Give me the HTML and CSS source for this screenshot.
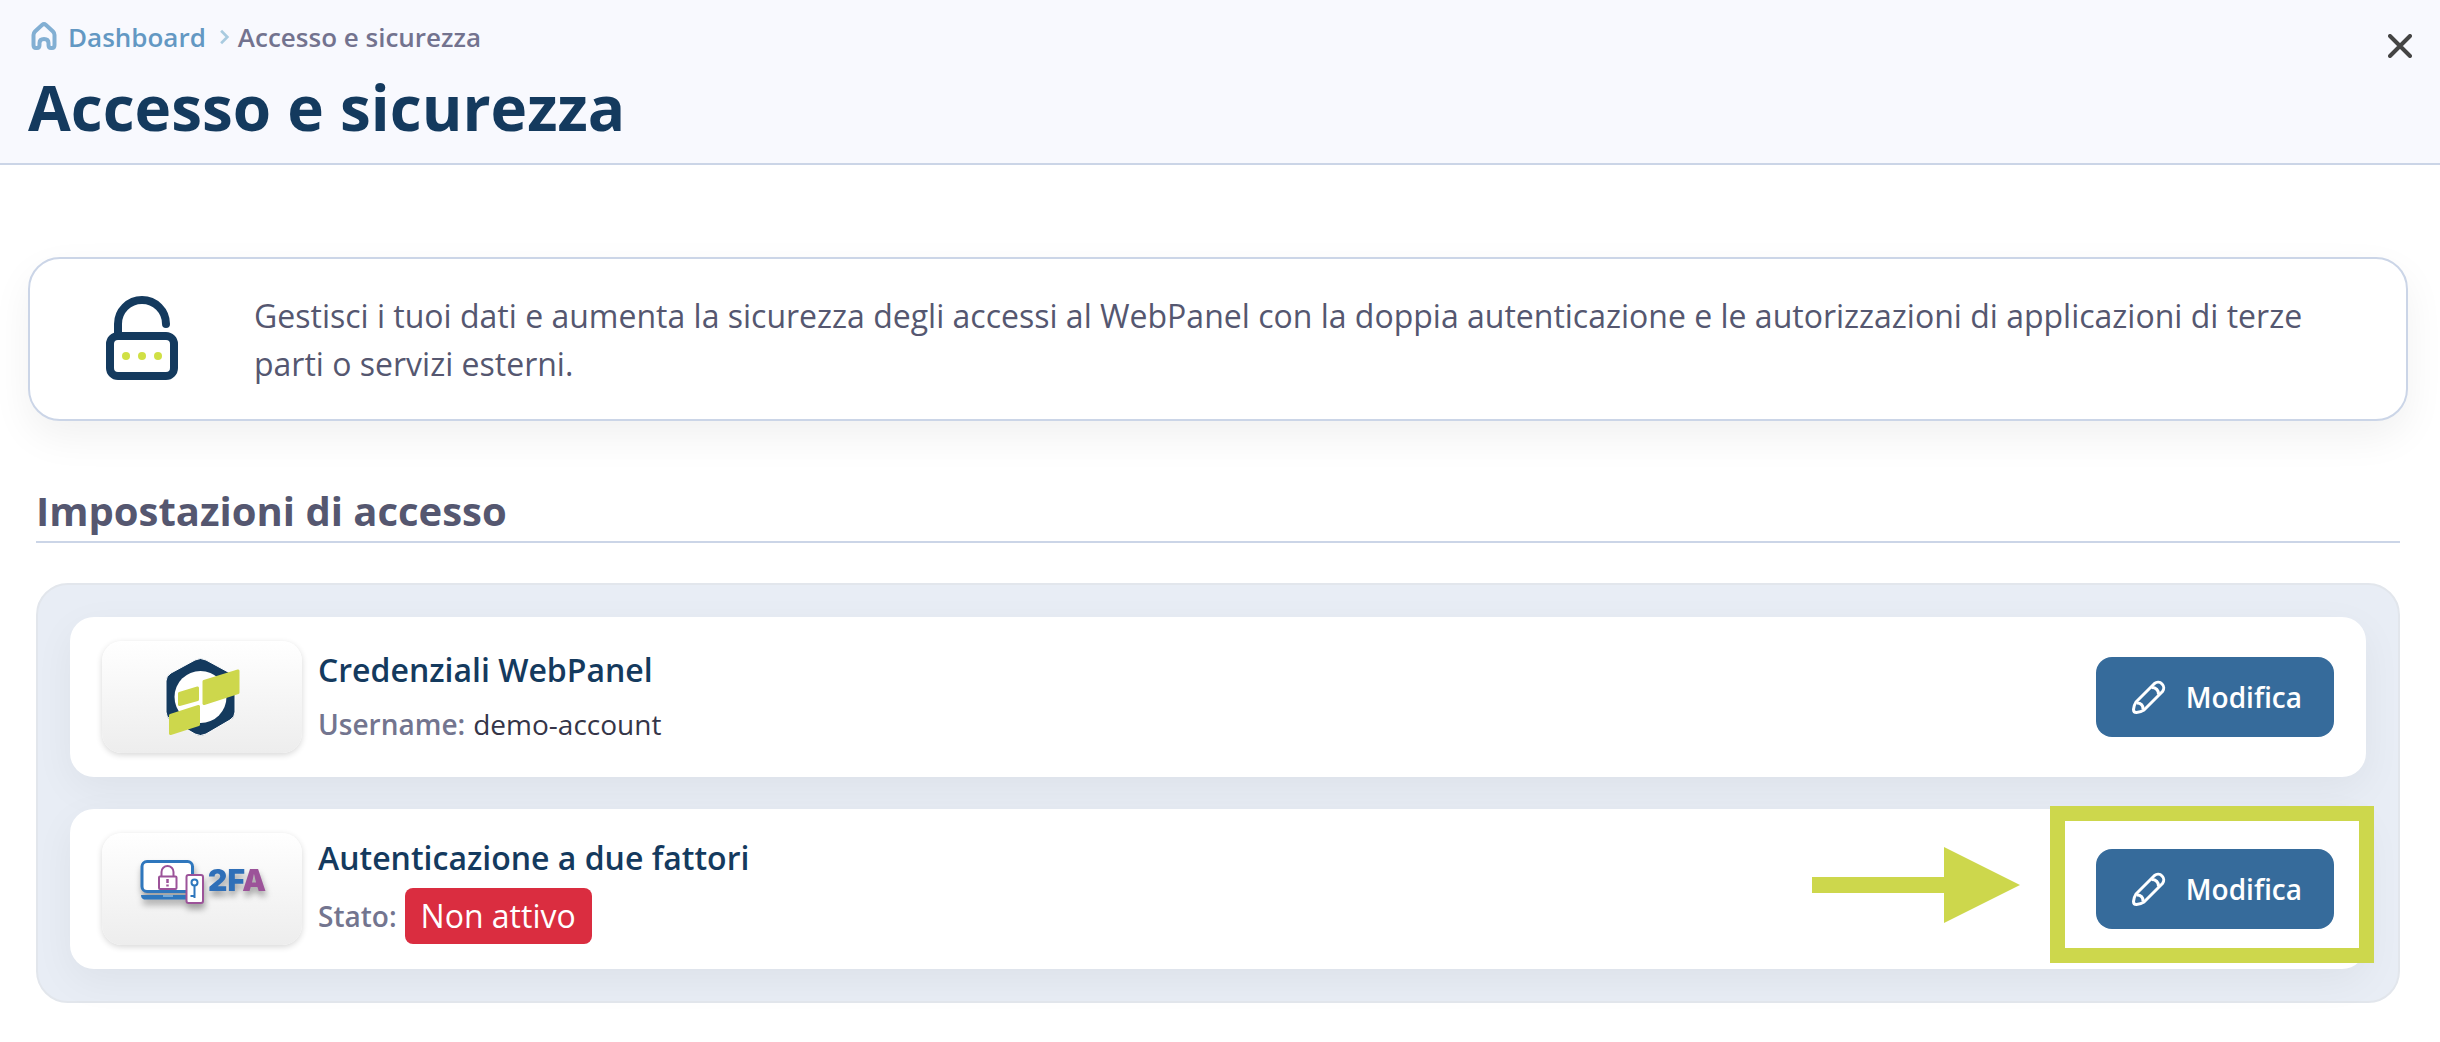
FILE: index.html
```html
<!DOCTYPE html>
<html lang="it">
<head>
  <meta charset="UTF-8" />
  <meta name="viewport" content="width=device-width, initial-scale=1.0"/>
  <title>Accesso e sicurezza</title>
  <link rel="stylesheet" href="styles.css">
</head>
<body>
  <!-- Header -->
  <header class="page-header">
    <div class="header-main">
      <nav class="breadcrumb" aria-label="Breadcrumb">
        <a href="#" class="breadcrumb-link">
          <svg class="home-icon" viewBox="0 0 32 32">
            <path d="M5.5 14q0-2 1.500-3.500l7-6.500q2-1.700 4 0l7 6.500q1.500 1.500 1.500 3.500v10q0 3-2.500 3h-1q-2.500 0-2.500-3v-2q0-4-4.500-4t-4.500 4v2q0 3-2.500 3h-1q-2.500 0-2.500-3z"/>
          </svg>
          Dashboard
        </a>
        <svg class="chevron-icon" viewBox="0 0 18 18">
          <path d="M8 2l7 7-7 7"/>
        </svg>
        <span>Accesso e sicurezza</span>
      </nav>
      <h1>Accesso e sicurezza</h1>
    </div>
    <button type="button" class="close-btn" aria-label="Chiudi">
      <svg viewBox="0 0 24 24"><path d="M2 2l20 20M22 2L2 22"/></svg>
    </button>
  </header>

  <main>
    <!-- Info box -->
    <section class="info-box">
      <svg class="lock-icon" viewBox="0 0 72 88">
        <path class="lock-line" d="M12 40V28a24 24 0 0 1 48 0"/>
        <rect class="lock-line" x="4" y="40" width="64" height="40" rx="8"/>
        <g fill="#d0e044">
          <circle cx="20" cy="60" r="4"/>
          <circle cx="36" cy="60" r="4"/>
          <circle cx="52" cy="60" r="4"/>
        </g>
      </svg>
      <p>Gestisci i tuoi dati e aumenta la sicurezza degli accessi al WebPanel con la doppia autenticazione e le autorizzazioni di applicazioni di terze parti o servizi esterni.</p>
    </section>

    <!-- Access settings -->
    <section class="settings">
      <h2>Impostazioni di accesso</h2>
      <div class="panel">
        <div class="card">
          <div class="thumb">
            <svg class="logo-panel" viewBox="0 0 76 80">
              <path fill="#143a5e" stroke="#fff" d="M31 3q5.500-3 11 0l24 13q5 3 5 8v31q0 5-5 8L42 77q-5.500 3-11 0L7 63q-5-3-5-8V24q0-5 5-8z"/>
              <circle cx="36.500" cy="40" r="26" fill="#fff"/>
              <g fill="#cdd74c" stroke="#cdd74c" stroke-width="3" stroke-linejoin="round">
                <path d="M40 24.500l34-10.500v21.500L40 46.500z"/>
                <path d="M15.500 36.500l18-5.500v11.500l-18 5z"/>
                <path d="M6.500 58.500l28-9V67.500l-28 9z"/>
              </g>
            </svg>
          </div>
          <div class="card-text">
            <h3>Credenziali WebPanel</h3>
            <p>Username: <span class="username">demo-account</span></p>
          </div>
          <button type="button" class="edit-btn">
            <svg viewBox="0 0 34 34">
              <path d="M4 22L22.500 3.500a5.700 5.700 0 0 1 8 8L12 30q-3 2-7.500 2.500-3 0-3-3 .5-4.500 2.500-7.500z"/>
              <path d="M19.500 7.500q7 0 7 7M5 23q6 0 6 6"/>
            </svg>
            Modifica
          </button>
        </div>

        <div class="card">
          <div class="thumb">
            <svg class="logo-2fa" viewBox="0 0 130 64">
              <rect x="5" y="4.500" width="50.500" height="30" rx="5" fill="#fff" stroke="#2f77bd" stroke-width="3"/>
              <path d="M4 38h45v4.500H7q-3-1-3-4.500z" fill="#2f77bd"/>
              <path d="M26 39h10" stroke="#8db8e0" stroke-width="1.500"/>
              <g fill="none" stroke="#9c5399" stroke-width="2">
                <path d="M24.500 19v-4a6 6 0 0 1 12 0v4"/>
                <rect x="22" y="19.500" width="17.500" height="12.500" rx="1"/>
                <path d="M30.500 22v4m0 1.500v2" stroke-width="2.500"/>
                <rect x="49.500" y="18" width="16.500" height="28" rx="2" fill="#fff"/>
              </g>
              <g fill="none" stroke="#2f77bd" stroke-width="2">
                <circle cx="57.500" cy="25.500" r="3"/>
                <path d="M57.500 28.500v12.500m0-2h-4"/>
              </g>
              <text x="71" y="34" class="logo-text">2F<tspan fill="#9c5399">A</tspan></text>
            </svg>
          </div>
          <div class="card-text">
            <h3>Autenticazione a due fattori</h3>
            <p>Stato: <span class="badge">Non attivo</span></p>
          </div>
          <div class="highlight">
            <!-- Arrow pointing at the highlighted button -->
            <svg class="arrow" viewBox="0 0 208 76">
              <path fill="#cdd74c" d="M0 30h132V0l76 38-76 38V46H0z"/>
            </svg>
            <button type="button" class="edit-btn">
              <svg viewBox="0 0 34 34">
                <path d="M4 22L22.500 3.500a5.700 5.700 0 0 1 8 8L12 30q-3 2-7.500 2.500-3 0-3-3 .5-4.500 2.500-7.500z"/>
                <path d="M19.500 7.500q7 0 7 7M5 23q6 0 6 6"/>
              </svg>
              Modifica
            </button>
          </div>
        </div>
      </div>
    </section>
  </main>
</body>
</html>
```

FILE: styles.css
```css
* {
  box-sizing: border-box;
}
body {
  font-family: 'Open Sans', 'Noto Sans', sans-serif;
  background-color: #fff;
  color: #555770;
  margin: 0;
}
h1, h2, h3, p {
  margin: 0;
}
button {
  font-family: inherit;
  border: 0;
  cursor: pointer;
}
svg {
  display: block;
  flex-shrink: 0;
}

/* Header */
.page-header {
  display: flex;
  justify-content: space-between;
  align-items: flex-start;
  padding: 18px 28px 17px;
  background-color: #f8f9fe;
  border-bottom: 2px solid #cbd5e7;
}
.breadcrumb {
  display: flex;
  align-items: center;
  gap: 8px;
  font-size: 26px;
  font-weight: 600;
  line-height: 38px;
  color: #73738f;
}
.breadcrumb-link {
  display: flex;
  align-items: center;
  gap: 8px;
  color: #6398c3;
  text-decoration: none;
}
.home-icon {
  width: 32px;
  height: 32px;
  fill: none;
  stroke: #82afd3;
  stroke-width: 4;
}
.chevron-icon {
  width: 16px;
  height: 16px;
  fill: none;
  stroke: #a9cbe0;
  stroke-width: 3;
}
h1 {
  margin-top: 12px;
  font-size: 62px;
  font-weight: 700;
  line-height: 78px;
  color: #143a5e;
}
.close-btn {
  padding: 16px 0;
  background: none;
}
.close-btn svg {
  width: 24px;
  height: 24px;
  fill: none;
  stroke: #444;
  stroke-width: 4;
  stroke-linecap: round;
}

/* Info box */
main {
  padding: 92px 32px 32px 28px;
}
.info-box {
  display: flex;
  align-items: center;
  gap: 76px;
  padding: 33px 76px 31px;
  border: 2px solid #cbd5e7;
  border-radius: 32px;
  background-color: #fff;
  box-shadow: 0 16px 40px rgba(0, 0, 0, 0.06);
}
.info-box p {
  font-size: 32px;
  line-height: 48px;
}
.lock-icon {
  width: 72px;
  height: 88px;
}
.lock-line {
  fill: none;
  stroke: #143a5e;
  stroke-width: 8;
  stroke-linecap: round;
}

/* Settings */
.settings {
  padding: 64px 8px 0;
}
h2 {
  padding-bottom: 4px;
  border-bottom: 2px solid #cbd5e7;
  font-size: 40px;
  font-weight: 700;
  line-height: 52px;
}
.panel {
  display: flex;
  flex-direction: column;
  gap: 32px;
  margin-top: 40px;
  padding: 32px;
  border: 2px solid #e2e6ec;
  border-radius: 32px;
  background-color: #e8edf5;
}
.card {
  display: flex;
  align-items: center;
  gap: 16px;
  min-height: 160px;
  padding: 24px 32px;
  border-radius: 24px;
  background-color: #fff;
  box-shadow: 0 12px 40px rgba(0, 0, 0, 0.05);
}
.thumb {
  display: flex;
  align-items: center;
  justify-content: center;
  width: 200px;
  height: 112px;
  border-radius: 20px;
  background: linear-gradient(#fff, #ededed);
  box-shadow: 0 2px 6px rgba(0, 0, 0, 0.16);
}
.card-text {
  flex: 1;
}
h3 {
  margin-bottom: 6px;
  font-size: 32px;
  font-weight: 600;
  line-height: 48px;
  color: #143a5e;
}
.card-text p {
  display: flex;
  align-items: center;
  gap: 8px;
  font-size: 28px;
  font-weight: 600;
  line-height: 48px;
  color: #73758f;
}
.username {
  font-weight: 400;
  color: #353548;
}
.badge {
  padding: 0 16px;
  border-radius: 8px;
  background-color: #da2d40;
  color: #fff;
  font-size: 32px;
  font-weight: 400;
  line-height: 56px;
}
.edit-btn {
  display: flex;
  align-items: center;
  gap: 20px;
  height: 80px;
  padding: 0 32px 0 36px;
  border-radius: 16px;
  background-color: #366b9b;
  color: #fff;
  font-size: 28px;
  font-weight: 600;
}
.edit-btn svg {
  width: 34px;
  height: 34px;
  fill: none;
  stroke: #fff;
  stroke-width: 3;
  stroke-linejoin: round;
}

/* Highlight and arrow */
.highlight {
  position: relative;
}
.highlight::after {
  content: "";
  position: absolute;
  inset: -43px -40px -34px -46px;
  border: 15px solid #cdd74c;
  pointer-events: none;
}
.arrow {
  position: absolute;
  top: -2px;
  left: -284px;
  width: 208px;
  height: 76px;
}

/* Thumbnails */
.logo-panel {
  width: 76px;
  height: 80px;
}
.logo-2fa {
  width: 130px;
  height: 64px;
  filter: drop-shadow(1px 5px 3px rgba(0, 0, 0, 0.35));
}
.logo-text {
  font-family: 'Inter', sans-serif;
  font-size: 30px;
  font-weight: 900;
  fill: #2f6fb8;
}
```
